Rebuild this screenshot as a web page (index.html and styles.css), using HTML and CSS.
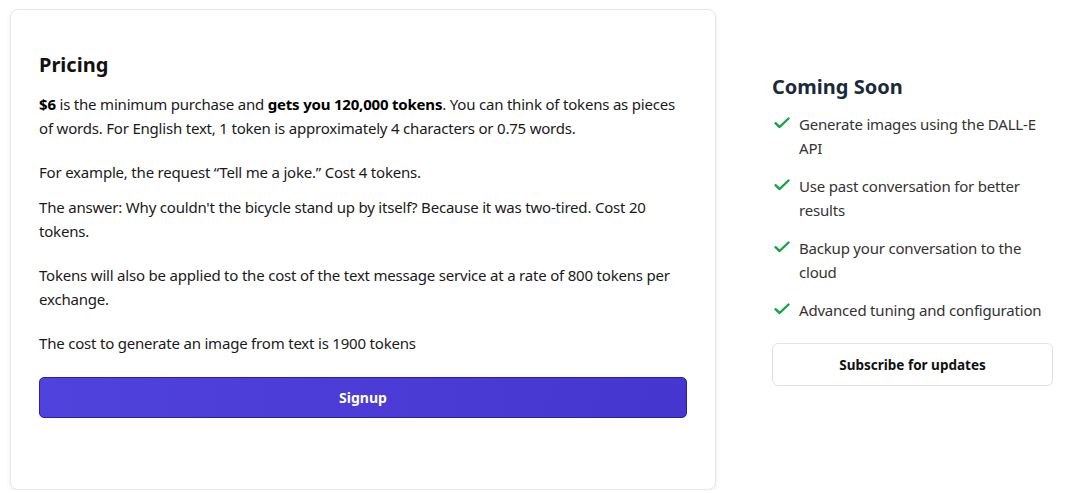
FILE: index.html
```html
<!DOCTYPE html>
<html>
<head>
<meta charset="utf-8">
<link rel="stylesheet" href="styles.css">
</head>
<body>
<div class="page">
  <section class="card">
    <h2 class="title">Pricing</h2>
    <p class="para"><b>$6</b> is the minimum purchase and <b>gets you 120,000 tokens</b>. You can think of tokens as pieces of words. For English text, 1 token is approximately 4 characters or 0.75 words.</p>
    <p class="para tight">For example, the request “Tell me a joke.” Cost 4 tokens.</p>
    <p class="para">The answer: Why couldn't the bicycle stand up by itself? Because it was two-tired. Cost 20 tokens.</p>
    <p class="para">Tokens will also be applied to the cost of the text message service at a rate of 800 tokens per exchange.</p>
    <p class="para last">The cost to generate an image from text is 1900 tokens</p>
    <button class="signup">Signup</button>
  </section>
  <aside class="side">
    <h2 class="side-title">Coming Soon</h2>
    <ul class="list">
      <li class="item"><svg class="check" viewBox="0 0 16 12"><path d="M1.5 6.2 L5.6 10 L14.5 1.5" fill="none" stroke="#16a34a" stroke-width="2.4" stroke-linecap="round" stroke-linejoin="round"/></svg><span>Generate images using the DALL-E API</span></li>
      <li class="item"><svg class="check" viewBox="0 0 16 12"><path d="M1.5 6.2 L5.6 10 L14.5 1.5" fill="none" stroke="#16a34a" stroke-width="2.4" stroke-linecap="round" stroke-linejoin="round"/></svg><span>Use past conversation for better results</span></li>
      <li class="item"><svg class="check" viewBox="0 0 16 12"><path d="M1.5 6.2 L5.6 10 L14.5 1.5" fill="none" stroke="#16a34a" stroke-width="2.4" stroke-linecap="round" stroke-linejoin="round"/></svg><span>Backup your conversation to the cloud</span></li>
      <li class="item"><svg class="check" viewBox="0 0 16 12"><path d="M1.5 6.2 L5.6 10 L14.5 1.5" fill="none" stroke="#16a34a" stroke-width="2.4" stroke-linecap="round" stroke-linejoin="round"/></svg><span>Advanced tuning and configuration</span></li>
    </ul>
    <button class="subscribe">Subscribe for updates</button>
  </aside>
</div>
</body>
</html>
```
FILE: styles.css
```css
* { box-sizing: border-box; }
body {
  margin: 0;
  background: #ffffff;
  font-family: "Noto Sans", "Open Sans", sans-serif;
  color: #111111;
  letter-spacing: -0.2px;
}
.page {
  display: flex;
  align-items: flex-start;
  padding: 9px 0 0 10px;
}
.card {
  width: 706px;
  height: 481px;
  border: 1px solid #e6e6ee;
  border-radius: 8px;
  box-shadow: 0 2px 4px rgba(0,0,0,0.08);
  padding: 40px 29px 0 28px;
  flex-shrink: 0;
}
.title {
  margin: 0 0 12px;
  font-size: 20px;
  line-height: 30px;
  font-weight: 700;
  color: #111;
  letter-spacing: 0;
}
.para {
  margin: 0 0 20px;
  font-size: 15px;
  line-height: 24px;
  color: #1a1a1a;
}
.para.tight { margin-bottom: 11px; }
.para.last { margin-bottom: 22px; }
.para b { font-weight: 700; color: #000; }
.signup {
  display: block;
  width: 648px;
  height: 41px;
  background: linear-gradient(100deg, #5042dd, #4636d0);
  border: 1.5px solid #2a1fa8;
  border-radius: 5px;
  color: #fff;
  font-family: "Noto Sans", sans-serif;
  font-weight: 700;
  font-size: 14px;
}
.side {
  margin-left: 56px;
  width: 281px;
  padding-top: 63px;
}
.side-title {
  margin: 0 0 10px;
  font-size: 20px;
  line-height: 30px;
  font-weight: 700;
  color: #1b2a3b;
  letter-spacing: 0;
}
.list {
  list-style: none;
  margin: 0;
  padding: 0;
}
.item {
  display: flex;
  align-items: flex-start;
  font-size: 15px;
  line-height: 24px;
  color: #333;
  margin-bottom: 14px;
}
.check {
  width: 16px;
  height: 12px;
  margin: 5px 9px 0 2px;
  flex-shrink: 0;
}
.subscribe {
  display: block;
  margin-top: 21px;
  width: 281px;
  height: 43px;
  background: #fff;
  border: 1px solid #e2e2e2;
  border-radius: 6px;
  font-family: "Noto Sans", sans-serif;
  font-weight: 700;
  font-size: 13.5px;
  color: #111;
}
```
